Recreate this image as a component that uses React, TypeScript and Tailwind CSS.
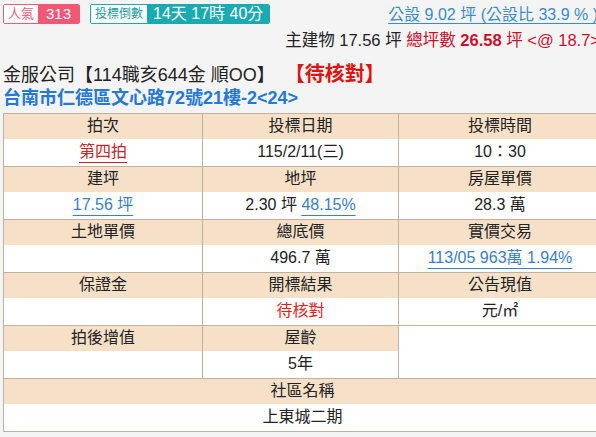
import React from 'react';

const FONT = '"Liberation Sans", "Noto Sans CJK TC", sans-serif';

type Cell = { label: string; value?: React.ReactNode };

const groups: Cell[][] = [
    [
        { label: '拍次', value: <span className="text-[#c1272d] underline underline-offset-[5px]">第四拍</span> },
        { label: '投標日期', value: '115/2/11(三)' },
        { label: '投標時間', value: '10：30' },
    ],
    [
        { label: '建坪', value: <span className="text-[#3a7ec6] underline underline-offset-[5px]">17.56 坪</span> },
        {
            label: '地坪',
            value: (
                <>
                    2.30 坪 <span className="text-[#3a7ec6] underline underline-offset-[5px]">48.15%</span>
                </>
            ),
        },
        { label: '房屋單價', value: '28.3 萬' },
    ],
    [
        { label: '土地單價', value: '' },
        { label: '總底價', value: '496.7 萬' },
        { label: '實價交易', value: <span className="text-[#3a7ec6] underline underline-offset-[5px]">113/05 963萬 1.94%</span> },
    ],
    [
        { label: '保證金', value: '' },
        { label: '開標結果', value: <span className="text-[#e0201c]">待核對</span> },
        { label: '公告現值', value: '元/㎡' },
    ],
];

const headCls = 'h-[25px] bg-[#f6e1c8] text-center font-normal p-0 border-x border-[#bfb19c]';
const valCls = 'h-[28px] bg-white text-center p-0 border-x border-b border-[#bfb19c]';

export default function App() {
    return (
        <div className="w-[596px] h-[437px] overflow-hidden bg-[#f4f4f4] text-[#222]" style={{ fontFamily: FONT }}>
            <div className="w-[601px]">
                {/* top bar */}
                <div className="flex justify-between items-start pl-[3px] pr-[3px] pt-[4px]">
                    <div className="flex items-center gap-[10px]">
                        <div className="flex h-[20px] items-stretch rounded-[2px] border border-[#ef5a78] overflow-hidden">
                            <span className="bg-white text-[#e0607a] text-[13px] leading-[18px] px-[4px]">人氣</span>
                            <span className="bg-[#f25775] text-white text-[15px] leading-[18px] px-[8px]">313</span>
                        </div>
                        <div className="flex h-[20px] items-stretch rounded-[2px] border border-[#1aa9af] overflow-hidden">
                            <span className="bg-white text-[#1a9aa0] text-[12px] leading-[18px] px-[4px]">投標倒數</span>
                            <span className="bg-[#1aabb1] text-white text-[16px] leading-[18px] px-[6px]">14天 17時 40分</span>
                        </div>
                    </div>
                    <div className="flex flex-col items-end">
                        <span className="text-[16px] leading-[22px] text-[#3b8bc9] underline underline-offset-[3px] whitespace-nowrap">
                            公設 9.02 坪 (公設比 33.9 % )
                        </span>
                        <span className="text-[16.5px] leading-[22px] mt-[3px] -mr-[2px] whitespace-nowrap">
                            主建物 17.56 坪 <span className="text-[#c8102e]">總坪數 <b>26.58</b> 坪 &lt;@ 18.7&gt;</span>
                        </span>
                    </div>
                </div>

                {/* title */}
                <div className="pl-[3px] mt-[11px] text-[18px] leading-[24px] whitespace-nowrap">
                    金服公司【114職亥644金 順OO】
                    <span className="ml-[20px] text-[20px] text-[#e0140f] font-bold">【待核對】</span>
                </div>
                <div className="pl-[3px] text-[18px] leading-[22px] font-bold text-[#2379d4] whitespace-nowrap">
                    台南市仁德區文心路72號21樓-2&lt;24&gt;
                </div>

                {/* table */}
                <table className="ml-[3px] mt-[4px] w-[598px] table-fixed border-collapse border-t border-[#bfb19c] text-[16px] leading-[20px]">
                    <colgroup>
                        <col className="w-[199px]" />
                        <col className="w-[196px]" />
                        <col className="w-[203px]" />
                    </colgroup>
                    <tbody>
                        {groups.map((g, i) => (
                            <React.Fragment key={i}>
                                <tr>
                                    {g.map(c => (
                                        <th key={c.label} className={headCls}>{c.label}</th>
                                    ))}
                                </tr>
                                <tr>
                                    {g.map(c => (
                                        <td key={c.label} className={valCls}>{c.value}</td>
                                    ))}
                                </tr>
                            </React.Fragment>
                        ))}
                        <tr>
                            <th className={headCls}>拍後增值</th>
                            <th className={headCls}>屋齡</th>
                            <td rowSpan={2} className={valCls}></td>
                        </tr>
                        <tr>
                            <td className={valCls}></td>
                            <td className={valCls}>5年</td>
                        </tr>
                        <tr>
                            <th colSpan={3} className={headCls}>社區名稱</th>
                        </tr>
                        <tr>
                            <td colSpan={3} className={valCls}>上東城二期</td>
                        </tr>
                    </tbody>
                </table>
            </div>
        </div>
    );
}
